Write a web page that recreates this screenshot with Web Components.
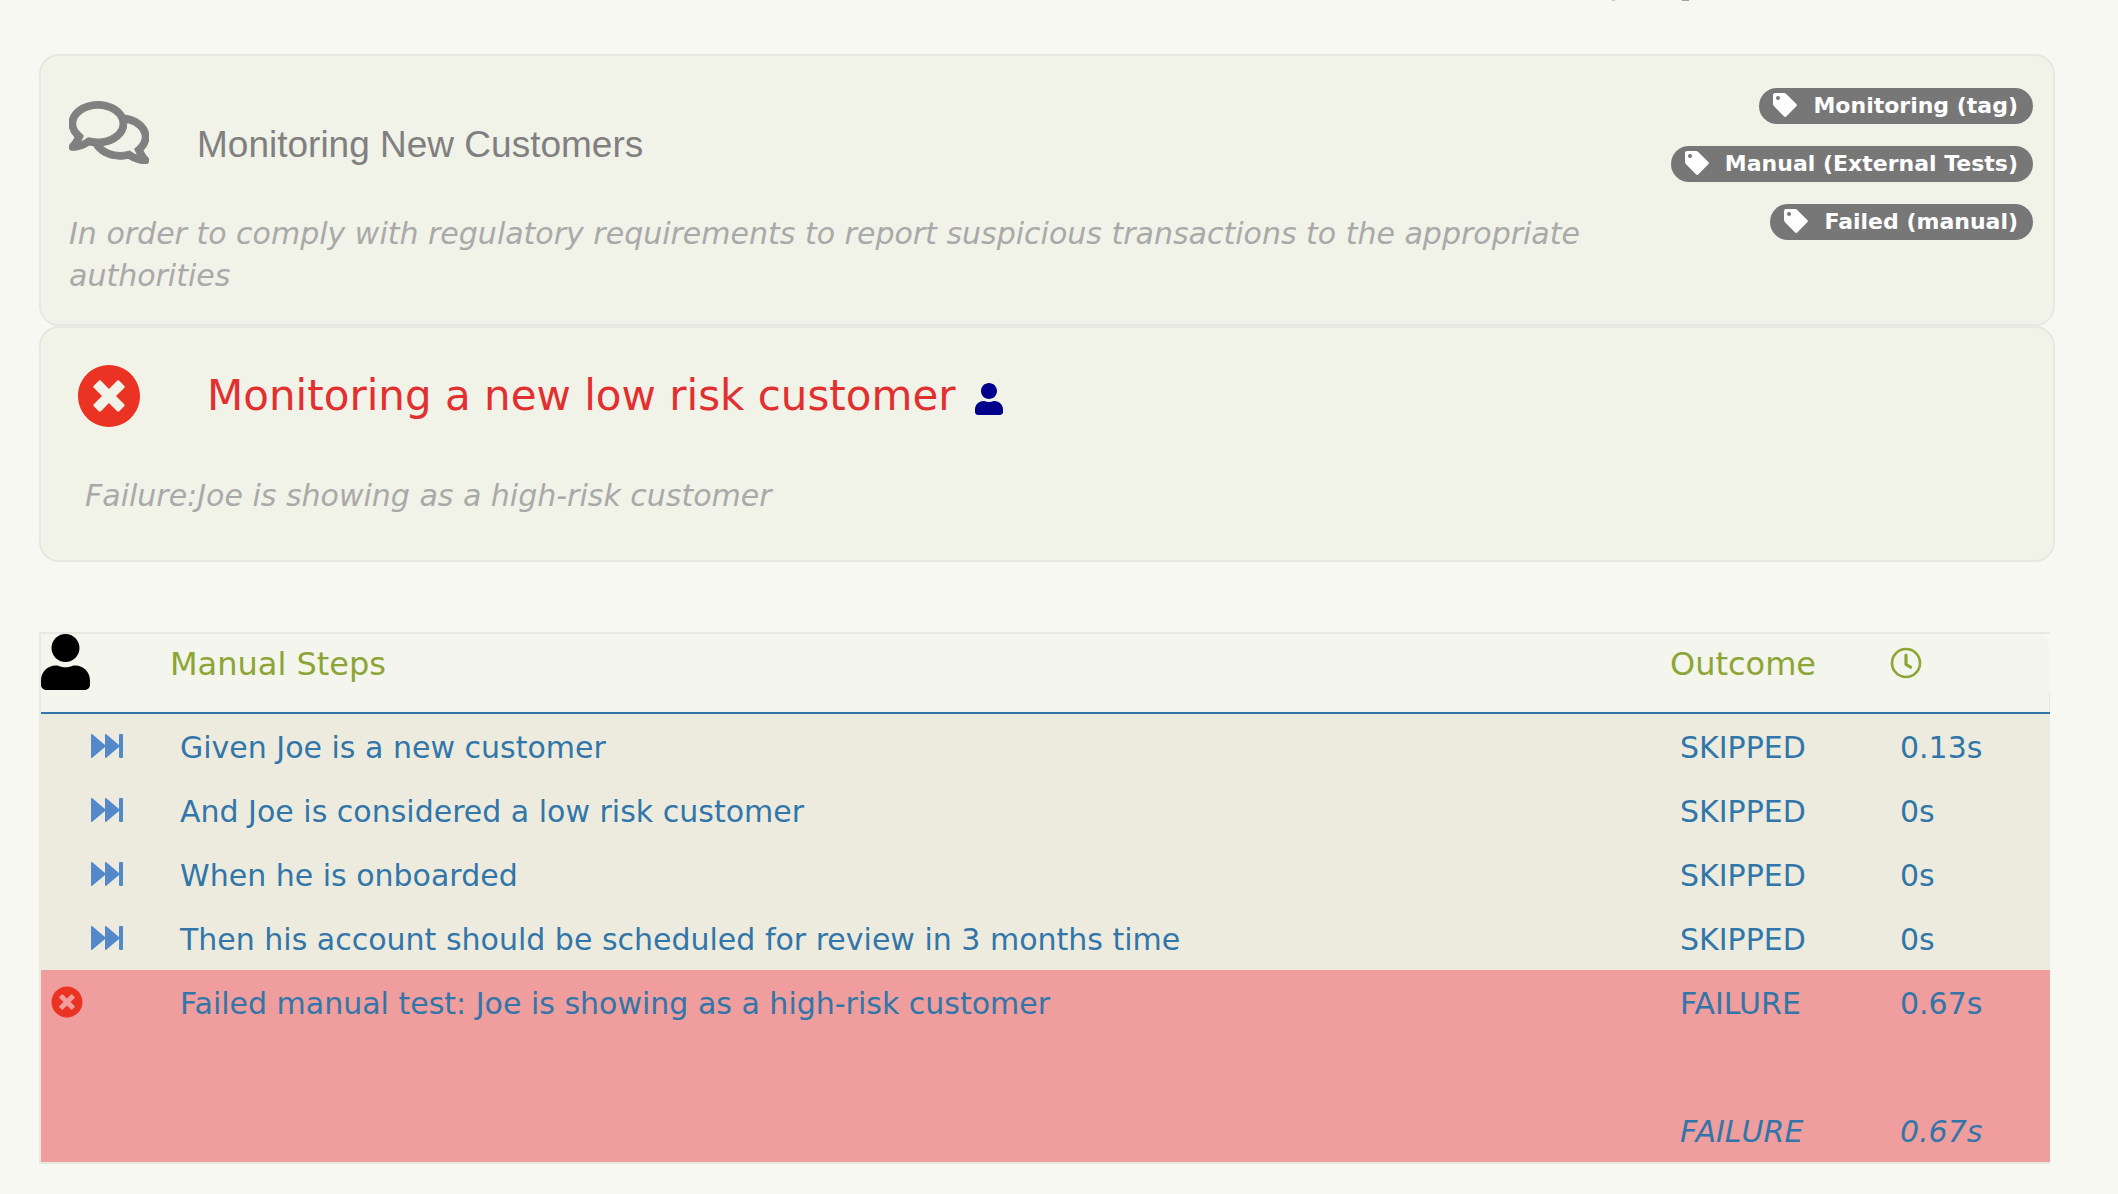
<!DOCTYPE html>
<html lang="en">
<head>
<meta charset="utf-8">
<title>Monitoring a new low risk customer</title>
<style>
  body { margin: 0; background: #f7f8f2; font-family: Verdana, "DejaVu Sans", sans-serif; font-size: 30px; line-height: 42px; }
</style>
</head>
<body>
<report-page></report-page>
<script>
const ICONS = {
  comments: ['0 0 576 512', '<path d="M532 386.200c27.500-27.100 44-61.100 44-98.200 0-80-76.500-146.100-176.200-157.900C368.300 72.500 294.300 32 208 32 93.100 32 0 103.600 0 192c0 37 16.500 71 44 98.200-15.300 30.700-37.300 54.500-37.700 54.900-6.300 6.700-8.100 16.500-4.400 25 3.600 8.500 12 14 21.200 14 53.500 0 96.700-20.200 125.200-38.800 9.200 2.100 18.700 3.700 28.400 4.900C208.100 407.600 281.800 448 368 448c20.800 0 40.800-2.400 59.800-6.800C456.300 459.700 499.400 480 553 480c9.200 0 17.500-5.500 21.200-14 3.600-8.500 1.900-18.300-4.400-25-.4-.3-22.500-24.100-37.800-54.800zm-392.800-92.300L122.100 305c-14.100 9.100-28.500 16.300-43.100 21.400 2.700-4.700 5.400-9.700 8-14.800l15.500-31.100L77.700 256C64.200 242.600 48 220.700 48 192c0-60.700 73.300-112 160-112s160 51.300 160 112-73.300 112-160 112c-16.500 0-33-1.900-49-5.600l-19.800-4.500zM498.300 352l-24.700 24.400 15.500 31.100c2.600 5.100 5.300 10.100 8 14.800-14.600-5.100-29-12.300-43.100-21.400l-17.100-11.100-19.900 4.600c-16 3.700-32.500 5.600-49 5.600-54 0-102.200-20.100-131.300-49.700C338 339.500 416 272.900 416 192c0-3.400-.4-6.700-.7-10C479.700 196.500 528 238.800 528 288c0 28.700-16.200 50.600-29.700 64z" stroke="currentColor" stroke-width="8"/>'],
  fail: ['0 0 512 512', '<path d="M256 8C119 8 8 119 8 256s111 248 248 248 248-111 248-248S393 8 256 8zm121.600 313.100c4.700 4.700 4.700 12.300 0 17L338 377.600c-4.700 4.700-12.300 4.700-17 0L256 312l-65.100 65.600c-4.700 4.700-12.300 4.700-17 0L134.400 338c-4.700-4.700-4.700-12.300 0-17l65.600-65-65.600-65.100c-4.700-4.700-4.700-12.300 0-17l39.600-39.600c4.700-4.700 12.300-4.700 17 0l65 65.700 65.100-65.600c4.700-4.700 12.300-4.700 17 0l39.600 39.600c4.700 4.700 4.700 12.300 0 17L312 256l65.600 65.100z"/>'],
  user: ['0 0 448 512', '<path d="M224 256c70.700 0 128-57.300 128-128S294.700 0 224 0 96 57.300 96 128s57.300 128 128 128zm89.600 32h-16.700c-22.200 10.200-46.900 16-72.900 16s-50.600-5.800-72.900-16h-16.700C60.200 288 0 348.200 0 422.400V464c0 26.500 21.500 48 48 48h352c26.500 0 48-21.500 48-48v-41.600c0-74.200-60.200-134.400-134.400-134.400z"/>'],
  tag: ['0 0 24 24', '<path fill-rule="evenodd" d="M2 0h9.500L13 .7 23.300 11a1.700 1.700 0 0 1 0 2.300l-9.800 10a1.800 1.800 0 0 1-2.600 0L.8 13 0 11.300V2a2 2 0 0 1 2-2zM5 3a2 2 0 1 0 0 4 2 2 0 0 0 0-4z"/>'],
  skip: ['0 0 33 24', '<path d="M0 1Q0-.8 1.600.5L14 11V1Q14-.8 15.600.5L28 11V1q0-1 1-1h2q1 0 1 1v22q0 1-1 1h-2q-1 0-1-1V13L15.600 23.500Q14 24.800 14 23V13L1.600 23.500Q0 24.800 0 23z"/>'],
  clock: ['0 0 32 32', '<circle cx="16" cy="16" r="14" fill="none" stroke="currentColor" stroke-width="2.600"/><path fill="none" stroke="currentColor" stroke-width="3.200" stroke-linecap="round" stroke-linejoin="round" d="M16 8V17.500l4.500 2.700"/>']
};

class ReportIcon extends HTMLElement {
  connectedCallback() {
    const [box, art] = ICONS[this.getAttribute('name')];
    this.attachShadow({ mode: 'open' }).innerHTML =
      `<style>:host{display:inline-block;flex:none}svg{display:block;width:100%;height:100%;fill:currentColor}</style>
       <svg viewBox="${box}" aria-hidden="true">${art}</svg>`;
  }
}
customElements.define('report-icon', ReportIcon);

class TagPill extends HTMLElement {
  connectedCallback() {
    this.attachShadow({ mode: 'open' }).innerHTML = `
      <style>
        :host { display: block; }
        a { display: flex; align-items: center; gap: 16px; height: 36px; padding: 0 15px 0 14px; border-radius: 18px;
            background: #777; color: #fff; font-size: 22px; line-height: 36px; font-weight: bold; text-decoration: none; white-space: nowrap; }
        report-icon { width: 24px; height: 24px; margin-bottom: 2px; }
      </style>
      <a href="#"><report-icon name="tag"></report-icon><slot></slot></a>`;
  }
}
customElements.define('tag-pill', TagPill);

class ReportCard extends HTMLElement {
  connectedCallback() {
    this.attachShadow({ mode: 'open' }).innerHTML = `
      <style>
        :host { display: flex; justify-content: space-between; box-sizing: border-box; border: 2px solid #e7e8e2;
                border-radius: 20px; background: #f1f2e8; }
        .main { flex: 1; }
        .side { display: flex; flex-direction: column; align-items: flex-end; gap: 22px; }
      </style>
      <div class="main"><slot></slot></div><div class="side"><slot name="side"></slot></div>`;
  }
}
customElements.define('report-card', ReportCard);

class StepTable extends HTMLElement {
  connectedCallback() {
    const steps = [
      ['Given Joe is a new customer', 'SKIPPED', '0.13s'],
      ['And Joe is considered a low risk customer', 'SKIPPED', '0s'],
      ['When he is onboarded', 'SKIPPED', '0s'],
      ['Then his account should be scheduled for review in 3 months time', 'SKIPPED', '0s'],
      ['Failed manual test: Joe is showing as a high-risk customer', 'FAILURE', '0.67s']
    ];
    const rows = steps.map(([text, outcome, time]) => {
      const failed = outcome === 'FAILURE';
      return `<tr class="${failed ? 'failed' : ''}"><td class="mark"><report-icon name="${failed ? 'fail' : 'skip'}"></report-icon></td>
        <td>${text}</td><td>${outcome}</td><td>${time}</td></tr>`;
    }).join('');
    this.attachShadow({ mode: 'open' }).innerHTML = `
      <style>
        :host { display: block; }
        table { width: 100%; table-layout: fixed; border-collapse: separate; border-spacing: 0; border: 2px solid #e7e8e2; border-right: 0; }
        .c0 { width: 129px; } .c2 { width: 220px; } .c3 { width: 160px; }
        th { height: 78px; padding: 0; border-bottom: 2px solid #3276a9; background: #f4f5ec; color: #8ca536; text-align: left;
             vertical-align: top; font-weight: normal; font-size: 32px; line-height: 60px; }
        th:last-child { background: linear-gradient(#e7e8e2, #e7e8e2) right bottom / 1px 20px no-repeat,
             radial-gradient(circle at 0 100%, #f4f5ec 16px, #f7f8f2 17px) right top / 16px 16px no-repeat, #f4f5ec; }
        thead report-icon { display: block; }
        .who { width: 49px; height: 56px; color: #000; }
        .clock { width: 32px; height: 32px; margin-top: 13px; }
        td { height: 64px; box-sizing: border-box; padding: 4px 0 0 10px; background: #edebde; color: #3276a9; line-height: 60px; }
        td.mark { padding-top: 0; }
        .mark report-icon { display: block; width: 33px; height: 24px; margin-left: 40px; color: #5489c9; }
        .failed td, tfoot td { background: #ef9d9d; }
        .failed .mark report-icon { width: 32px; height: 32px; margin-left: 0; color: #ea3323; }
        tfoot td { height: 128px; padding-top: 68px; font-style: italic; }
      </style>
      <table>
        <colgroup><col class="c0"><col><col class="c2"><col class="c3"></colgroup>
        <thead><tr><th><report-icon class="who" name="user"></report-icon></th><th>Manual Steps</th><th>Outcome</th>
          <th aria-label="Duration"><report-icon class="clock" name="clock"></report-icon></th></tr></thead>
        <tbody>${rows}</tbody>
        <tfoot><tr><td></td><td></td><td>FAILURE</td><td>0.67s</td></tr></tfoot>
      </table>`;
  }
}
customElements.define('step-table', StepTable);

class ReportPage extends HTMLElement {
  connectedCallback() {
    this.attachShadow({ mode: 'open' }).innerHTML = `
      <style>
        :host { display: block; padding: 0 63px 30px 39px; }
        h2, h3, p { margin: 0; font-weight: normal; }
        .specks { display: flex; justify-content: flex-end; gap: 67px; height: 1px; padding-right: 366px; margin-bottom: 53px; }
        .specks i { width: 3px; background: #c4c5c1; }
        .specks i + i { width: 7px; background: #a3a4a0; }
        .feature { padding: 32px 20px 27px 28px; }
        .feature header { display: flex; align-items: center; gap: 48px; height: 102px; margin: 6px 0 17px; }
        .feature report-icon { width: 80px; height: 71px; color: #808080; margin-bottom: 26px; }
        h2 { font: 37px/54px "Liberation Sans", Arial, sans-serif; color: #808080; }
        p { font-style: italic; color: #a9a9a9; }
        .scenario { padding: 36px; height: 236px; }
        .scenario header { display: flex; align-items: center; height: 64px; }
        .scenario header > report-icon:first-child { width: 64px; height: 64px; color: #ea3323; }
        h3 { margin: 0 19px 0 66px; font-size: 42px; line-height: 64px; color: #e22f2f; }
        .manual { width: 28px; height: 32px; margin-top: 6px; color: #00008b; }
        .scenario p { padding: 47px 0 0 8px; }
        step-table { margin: 70px 5px 0 0; }
      </style>
      <div class="specks" aria-hidden="true"><i></i><i></i></div>
      <report-card class="feature">
        <header><report-icon name="comments"></report-icon><h2>Monitoring New Customers</h2></header>
        <p>In order to comply with regulatory requirements to report suspicious transactions to the appropriate authorities</p>
        <tag-pill slot="side">Monitoring (tag)</tag-pill>
        <tag-pill slot="side">Manual (External Tests)</tag-pill>
        <tag-pill slot="side">Failed (manual)</tag-pill>
      </report-card>
      <report-card class="scenario">
        <header><report-icon name="fail"></report-icon><h3>Monitoring a new low risk customer</h3><report-icon class="manual" name="user"></report-icon></header>
        <p>Failure:Joe is showing as a high-risk customer</p>
      </report-card>
      <step-table></step-table>`;
  }
}
customElements.define('report-page', ReportPage);
</script>
</body>
</html>
